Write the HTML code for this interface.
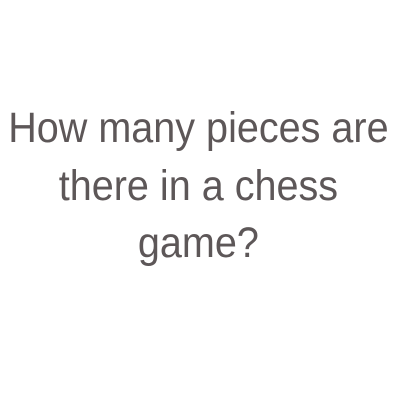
<!DOCTYPE html>
<html><head><style>
html,body{margin:0;width:400px;height:400px;background:#fff;overflow:hidden}
.t{position:absolute;top:100px;left:-20px;width:440px;text-align:center;font-family:"Liberation Sans",sans-serif;font-size:43px;line-height:57.5px;color:#5d5758;transform:scaleX(0.92);transform-origin:200px 0}
</style></head><body>
<div class="t">How many pieces are<br>there in a chess<br>game?</div>
</body></html>
